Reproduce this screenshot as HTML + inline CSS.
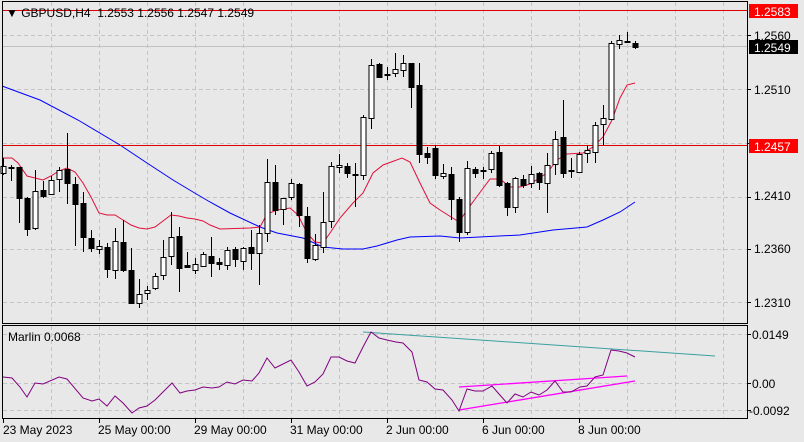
<!DOCTYPE html>
<html><head><meta charset="utf-8"><style>
html,body{margin:0;padding:0;background:#e8e8e8;width:804px;height:442px;overflow:hidden}
svg{display:block}
text{font-family:"Liberation Sans",Tahoma,sans-serif;font-size:12px;fill:#000}
</style></head><body>
<svg id="s" width="804" height="442" xmlns="http://www.w3.org/2000/svg">
<rect width="804" height="442" fill="#e8e8e8"/>
<g id="grid" stroke="#c4c4c4" stroke-dasharray="4,3" stroke-width="1"></g>
<polyline fill="none" stroke="#0000ff" stroke-width="1" points="2,86 40,100 78,120 120,145 147,163 173,180 193,192 210,202 230,213 260,227 277,233 303,238 323,247 343,249 363,249 377,246 397,240 410,237 440,236 460,238 520,235 553,230 587,227 603,220 620,212 635,202"/>
<polyline fill="none" stroke="#e0103a" stroke-width="1" points="2,158 12,158 18,163 27,176 35,178 43,180 51,176 59,171 67,168 75,172 83,183 91,197 99,213 107,215 115,215 123,220 131,225 139,228 147,229 155,227 163,221 171,215 179,216 187,218 195,219 203,221 210,225 220,229 250,228 260,227 267,214 277,210 290,208 298,215 307,233 315,242 323,243 330,233 340,218 353,203 363,193 373,173 383,165 402,158 410,162 420,183 430,203 440,210 459,222 467,210 490,179 500,179 510,187 520,187 530,184 547,173 557,160 567,154 583,153 593,147 603,137 612,120 620,98 627,85 635,83"/>
<line x1="2" y1="145.5" x2="747" y2="145.5" stroke="#e00000"/>
<line x1="2" y1="10.5" x2="747" y2="10.5" stroke="#e00000"/>
<line x1="2" y1="46.5" x2="747" y2="46.5" stroke="#c0c0c0"/>
<g id="candles"></g>
<polyline fill="none" stroke="#3aa0a0" stroke-width="1" points="363,332 715,356"/>
<polyline fill="none" stroke="#ff00ff" stroke-width="1.3" points="459,387 627,376"/>
<polyline fill="none" stroke="#ff00ff" stroke-width="1.3" points="459,410 635,381"/>
<polyline fill="none" stroke="#800080" stroke-width="1" points="3,377 12,378 20,387 27,397 35,383 43,384 59,377 67,379 83,398 92,401 99,399 107,406 115,396 123,403 132,413 139,408 147,406 155,400 172,383 180,393 187,391 195,390 203,387 212,388 219,387 227,382 235,384 243,380 252,381 259,373 267,358 275,368 291,360 299,372 307,386 315,382 323,374 331,357 339,357 347,361 355,363 363,347 371,332 379,338 387,340 396,342 403,343 412,352 419,380 427,382 435,389 443,390 452,400 459,411 467,389 475,391 483,391 492,386 499,394 507,403 515,394 523,397 531,392 539,395 547,390 555,381 563,392 571,392 580,387 587,386 595,377 603,375 611,350 619,351 627,353 635,357"/>
<!-- frames -->
<rect x="2.5" y="1.5" width="745" height="322" fill="none" stroke="#000"/>
<rect x="2.5" y="325.5" width="745" height="93" fill="none" stroke="#000"/>
<g id="ticks" stroke="#000"></g>
<text x="6" y="17">&#9660; GBPUSD,H4&#160;&#160;1.2553 1.2556 1.2547 1.2549</text>
<text x="8" y="341">Marlin 0.0068</text>
<text x="754" y="40">1.2560</text>
<text x="754" y="94">1.2510</text>
<text x="754" y="200">1.2410</text>
<text x="754" y="253">1.2360</text>
<text x="754" y="307">1.2310</text>
<rect x="749" y="4" width="49" height="14" fill="#ff0000"/>
<text x="754" y="16" style="fill:#fff">1.2583</text>
<rect x="749" y="40" width="49" height="14" fill="#000"/>
<text x="754" y="52" style="fill:#fff">1.2549</text>
<rect x="749" y="139" width="49" height="14" fill="#ff0000"/>
<text x="754" y="151" style="fill:#fff">1.2457</text>
<text x="752" y="339">0.0149</text>
<text x="752" y="388">0.00</text>
<text x="749" y="415">-0.0092</text>
<text x="3" y="434">23 May 2023</text>
<text x="98" y="434">25 May 00:00</text>
<text x="194" y="434">29 May 00:00</text>
<text x="290" y="434">31 May 00:00</text>
<text x="386" y="434">2 Jun 00:00</text>
<text x="482" y="434">6 Jun 00:00</text>
<text x="578" y="434">8 Jun 00:00</text>
</svg>
<script>
var NS="http://www.w3.org/2000/svg";
function el(p,t,a){var e=document.createElementNS(NS,t);for(var k in a)e.setAttribute(k,a[k]);p.appendChild(e);return e;}
var g=document.getElementById("grid");
for(var x=51;x<747;x+=48){el(g,"line",{x1:x+.5,y1:2,x2:x+.5,y2:323});el(g,"line",{x1:x+.5,y1:326,x2:x+.5,y2:418});}
[35,89,143,197,249,302].forEach(function(y){el(g,"line",{x1:3,y1:y+.5,x2:747,y2:y+.5});});
[334,383,410].forEach(function(y){el(g,"line",{x1:3,y1:y+.5,x2:747,y2:y+.5});});
var tk=document.getElementById("ticks");
[35,89,143,197,249,302,334,383,410].forEach(function(y){el(tk,"line",{x1:747,y1:y+.5,x2:751,y2:y+.5});});
[3,99,195,291,387,483,579].forEach(function(x){el(tk,"line",{x1:x+.5,y1:418,x2:x+.5,y2:423});});
// [hi, top, bot, lo, white]
var C=[[158,166,173,175,1],[165,167,168,181,0],[167,167,198,223,0],[197,198,229,236,0],[170,191,228,230,1],[181,190,196,198,0],[176,180,194,194,1],[167,170,179,192,1],[133,169,183,204,0],[177,184,204,246,0],[192,203,237,252,0],[230,238,248,252,0],[240,246,249,254,1],[243,247,269,278,0],[228,241,270,279,1],[220,242,270,272,0],[248,270,303,303,0],[279,294,303,308,1],[286,290,293,300,1],[273,276,288,290,1],[240,257,275,280,1],[212,237,256,265,1],[227,236,268,292,0],[252,265,267,268,0],[258,264,270,274,1],[252,254,266,267,1],[237,256,263,277,0],[258,262,264,270,0],[247,250,265,270,1],[247,249,259,267,0],[247,248,261,270,1],[230,247,253,270,0],[225,233,253,285,1],[159,182,233,242,1],[165,182,210,215,0],[198,198,209,225,1],[179,183,197,200,1],[183,184,215,227,0],[207,216,258,263,0],[234,245,259,261,1],[192,222,247,253,1],[162,166,221,228,1],[154,165,167,173,1],[163,166,173,178,0],[163,174,175,207,0],[115,117,175,180,1],[59,65,118,129,1],[63,64,77,78,0],[67,74,75,80,0],[53,69,73,77,1],[55,63,70,77,1],[63,63,87,108,0],[63,85,154,163,0],[147,153,157,164,0],[145,148,175,179,0],[164,173,176,179,1],[167,174,199,220,0],[197,199,232,242,0],[161,168,232,235,1],[167,169,173,178,0],[167,170,171,179,0],[151,153,169,173,1],[146,152,185,187,0],[182,183,207,216,0],[177,178,207,213,1],[175,179,185,188,0],[166,174,183,188,1],[172,173,182,190,0],[153,165,183,213,1],[131,139,164,175,1],[100,137,173,178,0],[158,170,171,178,1],[152,154,172,173,1],[145,150,153,163,1],[122,125,152,163,1],[105,118,124,145,1],[41,43,119,120,1],[35,40,44,49,1],[32,41,42,43,0],[41,43,47,49,0]];
var cg=document.getElementById("candles");
C.forEach(function(c,i){var x=3+8*i;if(x<3)return;
 el(cg,"line",{x1:x+.5,y1:c[0],x2:x+.5,y2:c[3],stroke:"#000"});
 var h=Math.max(1,c[2]-c[1]);
 if(c[4]) el(cg,"rect",{x:x-2,y:c[1]+.5,width:5,height:h,fill:"#fff",stroke:"#000"});
 else el(cg,"rect",{x:x-2.5,y:c[1],width:6,height:h+1,fill:"#000"});
});
</script>
</body></html>
